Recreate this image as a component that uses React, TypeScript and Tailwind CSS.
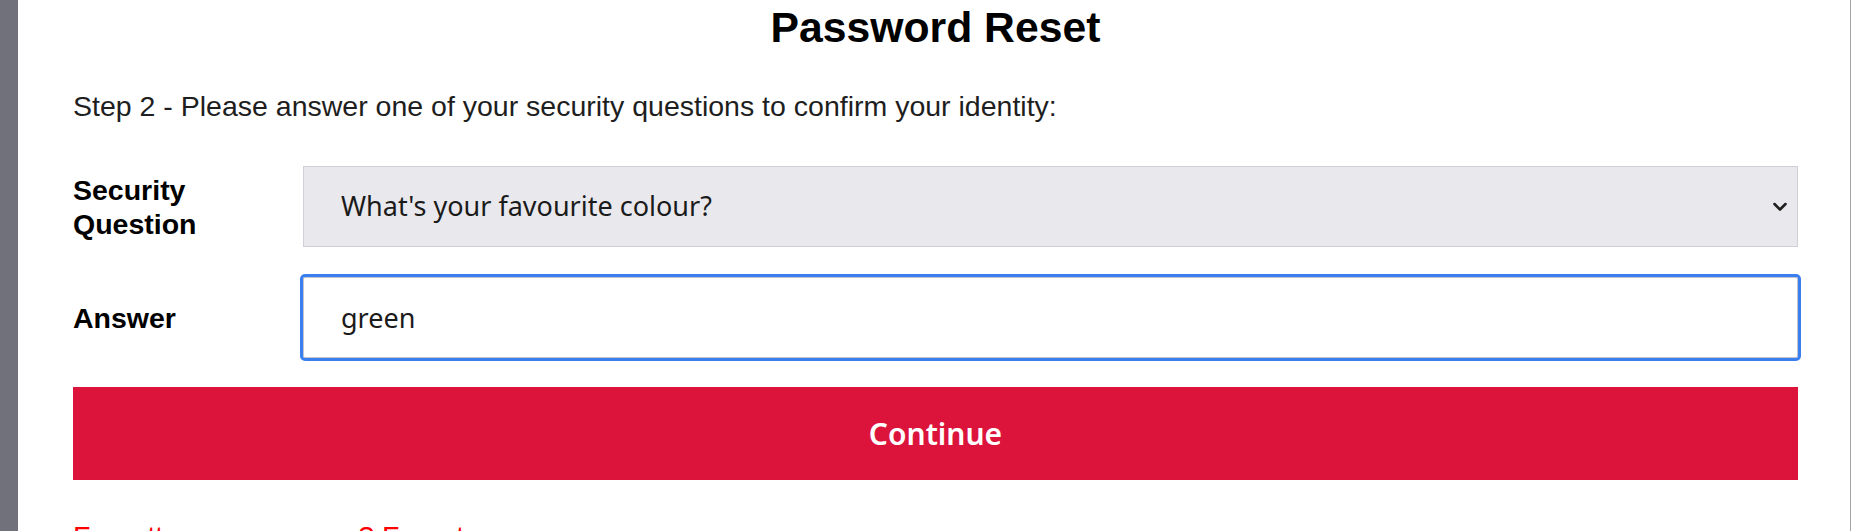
export default function App() {
  return (
    <div className="flex h-[531px] w-full overflow-hidden bg-white font-['Liberation_Sans',Arial,sans-serif]">
      <div className="w-[18px] shrink-0 bg-[#71717b]" />

      <main className="flex-1 border-r border-[#a6a6a6] pl-[55px] pr-[52px] pt-[2px]">
        <h2 className="text-center text-[42.7px] font-bold leading-[51px] text-black">
          Password Reset
        </h2>

        <p className="mt-[36px] text-[28.5px] leading-[34px] text-[#1e1e1e]">
          Step 2 - Please answer one of your security questions to confirm your identity:
        </p>

        <form className="mt-[43px] grid grid-cols-[230px_1fr] items-center gap-y-[30px]">
          <label className="text-[28.5px] font-bold leading-[34px] text-black">
            Security
            <br />
            Question
          </label>
          <div className="relative">
            <select
              defaultValue="colour"
              className="block h-[81px] w-full appearance-none rounded-none border border-[#cfcfd8] bg-[#e9e9ed] pl-[37px] font-['Noto_Sans',sans-serif] text-[27px] text-[#1b1b1b] outline-none"
            >
              <option value="colour">What's your favourite colour?</option>
              <option value="pet">What was the name of your first pet?</option>
              <option value="city">In which city were you born?</option>
            </select>
            <svg
              className="pointer-events-none absolute right-[11px] top-1/2 -translate-y-1/2"
              width="14"
              height="9"
              viewBox="0 0 14 9"
              fill="none"
            >
              <path d="M1.5 1.5 7 7l5.5-5.5" stroke="#1f1f1f" strokeWidth="2.6" strokeLinecap="round" strokeLinejoin="round" />
            </svg>
          </div>

          <label className="text-[28.5px] font-bold leading-[34px] text-black">Answer</label>
          <input
            type="text"
            defaultValue="green"
            className="block h-[81px] w-full rounded-[2px] border border-[#c4c4cc] bg-white pl-[37px] font-['Noto_Sans',sans-serif] text-[27px] text-[#1b1b1b] outline-3 outline-[#3a7ff0]"
          />
        </form>

        <button
          type="button"
          className="mt-[29px] block h-[93px] w-full bg-[#dc143c] font-['Noto_Sans',sans-serif] text-[30px] font-semibold text-white"
        >
          Continue
        </button>

        <p className="mt-[39px] text-[28.5px] leading-[34px] text-[#ff0000]">
          Forgotten your answer? Forgot username
        </p>
      </main>

      <div className="w-px shrink-0 bg-white" />
    </div>
  );
}
